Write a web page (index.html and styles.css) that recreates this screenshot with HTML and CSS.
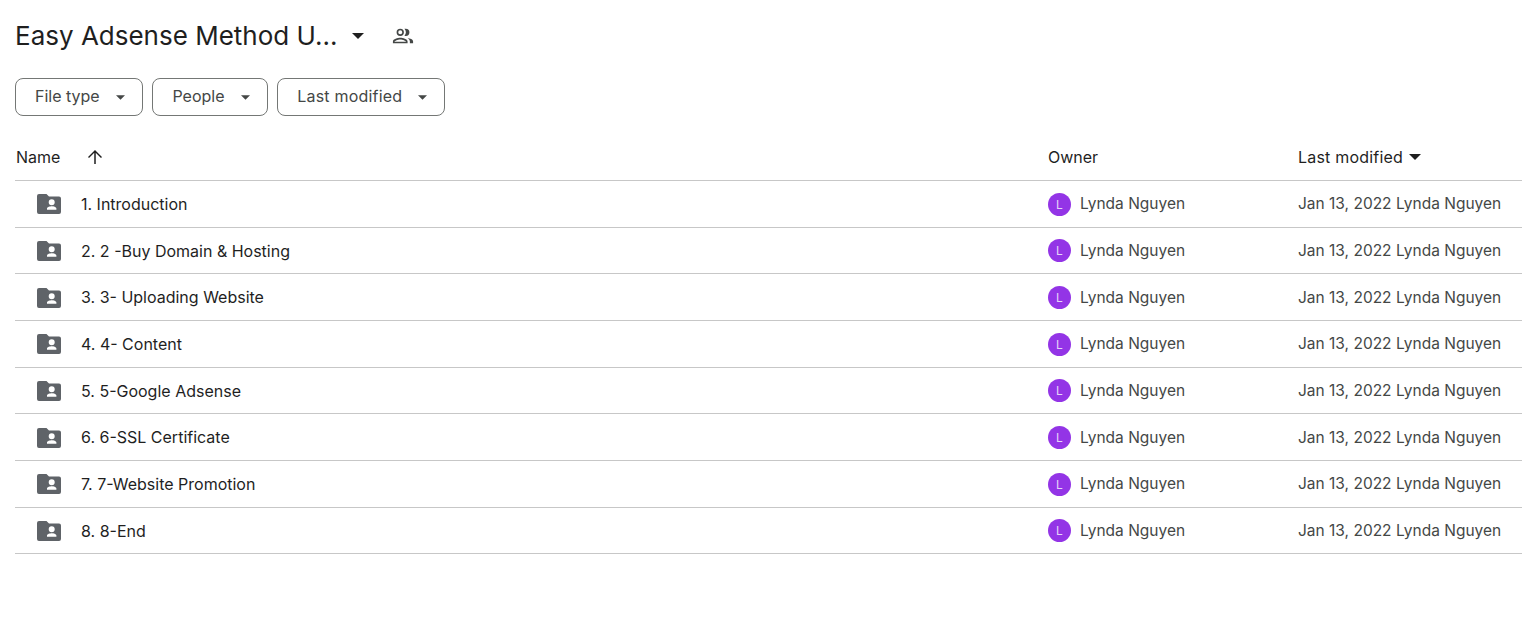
FILE: index.html

```html
<!DOCTYPE html>
<html lang="en">
<head>
    <meta charset="UTF-8">
    <title>Easy Adsense Method - Google Drive</title>
    <link rel="stylesheet" href="styles.css">
</head>
<body>
<svg class="icon-defs" width="0" height="0">
    <symbol id="folder" viewBox="0 0 24 20">
        <path fill-rule="evenodd" d="M2 0h7.500l2.500 2.500h10a2 2 0 0 1 2 2V18a2 2 0 0 1-2 2H2a2 2 0 0 1-2-2V2a2 2 0 0 1 2-2zm12.700 5.300a3 3 0 1 0 0 6 3 3 0 0 0 0-6zm-4.700 10.400h9.400v-1.200c0-1.500-3-2.300-4.700-2.300s-4.700.8-4.700 2.300z"/>
    </symbol>
    <symbol id="caret" viewBox="0 0 10 5">
        <path d="M0 0l5 5 5-5z"/>
    </symbol>
</svg>

<header class="title-row">
    <h1>Easy Adsense Method U...</h1>
    <svg class="title-caret"><use href="#caret"/></svg>
    <svg class="shared-icon" viewBox="0 0 24 24">
        <path d="M9 12a4 4 0 1 0 0-8 4 4 0 0 0 0 8zm0-6.200a2.200 2.200 0 1 1 0 4.400 2.200 2.200 0 0 1 0-4.400zM9 14c-2.700 0-8 1.300-8 4v2h16v-2c0-2.700-5.300-4-8-4zm-6.200 4.200c.2-.9 3.500-2.400 6.200-2.400s6 1.500 6.200 2.400zM15 4c-.5 0-1 .1-1.400.2a6 6 0 0 1 0 7.600c.4.100.9.200 1.400.200a4 4 0 0 0 0-8zM17 14.200c1.400 1 2.500 2.200 2.500 3.800v2H23v-2c0-2.300-3.300-3.400-6-3.800z"/>
    </svg>
</header>

<div class="filters">
    <button class="chip">File type <svg class="chip-caret"><use href="#caret"/></svg></button>
    <button class="chip">People <svg class="chip-caret"><use href="#caret"/></svg></button>
    <button class="chip last-mod">Last modified <svg class="chip-caret"><use href="#caret"/></svg></button>
</div>

<div class="file-list">
    <div class="row head">
        <div class="col-name">
            Name
            <svg class="sort-arrow" viewBox="0 0 16 16"><path d="M8.750 15h-1.500V3.800L2 9 1 8l7-7 7 7-1 1-5.250-5.200z"/></svg>
        </div>
        <div class="col-owner">Owner</div>
        <div class="col-modified last-mod">Last modified <svg class="head-caret"><use href="#caret"/></svg></div>
    </div>

    <div class="row">
        <div class="col-name"><svg class="folder"><use href="#folder"/></svg><span class="file-name">1. Introduction</span></div>
        <div class="col-owner"><span class="avatar">L</span>Lynda Nguyen</div>
        <div class="col-modified"><span class="date">Jan 13, 2022</span>Lynda Nguyen</div>
    </div>
    <div class="row">
        <div class="col-name"><svg class="folder"><use href="#folder"/></svg><span class="file-name">2. 2 -Buy Domain &amp; Hosting</span></div>
        <div class="col-owner"><span class="avatar">L</span>Lynda Nguyen</div>
        <div class="col-modified"><span class="date">Jan 13, 2022</span>Lynda Nguyen</div>
    </div>
    <div class="row">
        <div class="col-name"><svg class="folder"><use href="#folder"/></svg><span class="file-name">3. 3- Uploading Website</span></div>
        <div class="col-owner"><span class="avatar">L</span>Lynda Nguyen</div>
        <div class="col-modified"><span class="date">Jan 13, 2022</span>Lynda Nguyen</div>
    </div>
    <div class="row">
        <div class="col-name"><svg class="folder"><use href="#folder"/></svg><span class="file-name">4. 4- Content</span></div>
        <div class="col-owner"><span class="avatar">L</span>Lynda Nguyen</div>
        <div class="col-modified"><span class="date">Jan 13, 2022</span>Lynda Nguyen</div>
    </div>
    <div class="row">
        <div class="col-name"><svg class="folder"><use href="#folder"/></svg><span class="file-name">5. 5-Google Adsense</span></div>
        <div class="col-owner"><span class="avatar">L</span>Lynda Nguyen</div>
        <div class="col-modified"><span class="date">Jan 13, 2022</span>Lynda Nguyen</div>
    </div>
    <div class="row">
        <div class="col-name"><svg class="folder"><use href="#folder"/></svg><span class="file-name">6. 6-SSL Certificate</span></div>
        <div class="col-owner"><span class="avatar">L</span>Lynda Nguyen</div>
        <div class="col-modified"><span class="date">Jan 13, 2022</span>Lynda Nguyen</div>
    </div>
    <div class="row">
        <div class="col-name"><svg class="folder"><use href="#folder"/></svg><span class="file-name">7. 7-Website Promotion</span></div>
        <div class="col-owner"><span class="avatar">L</span>Lynda Nguyen</div>
        <div class="col-modified"><span class="date">Jan 13, 2022</span>Lynda Nguyen</div>
    </div>
    <div class="row">
        <div class="col-name"><svg class="folder"><use href="#folder"/></svg><span class="file-name">8. 8-End</span></div>
        <div class="col-owner"><span class="avatar">L</span>Lynda Nguyen</div>
        <div class="col-modified"><span class="date">Jan 13, 2022</span>Lynda Nguyen</div>
    </div>
</div>
</body>
</html>
```

FILE: styles.css

```css
html, body {
    height: 100%;
}
body {
    margin: 0;
    padding: 0 0 0 15px;
    background: #fff;
    color: #1f1f1f;
    font-family: Inter, "Open Sans", sans-serif;
    font-size: 15.5px;
    overflow: hidden;
    box-sizing: border-box;
}
.icon-defs {
    display: block;
    position: absolute;
}
.title-row {
    display: flex;
    align-items: center;
    height: 71px;
}
h1 {
    margin: 0;
    font-size: 26px;
    font-weight: 400;
    line-height: 36px;
    width: 337px;
    white-space: nowrap;
}
.title-caret {
    width: 12px;
    height: 6px;
    fill: #1f1f1f;
}
.shared-icon {
    width: 22px;
    height: 22px;
    fill: #444746;
    margin-left: 28px;
}
.filters {
    display: flex;
    gap: 9.75px;
    margin-top: 7px;
}
.chip {
    display: flex;
    align-items: center;
    height: 38px;
    padding: 0 17px 2px 19px;
    border: 1px solid #747775;
    border-radius: 8px;
    background: #fff;
    color: #444746;
    font-family: inherit;
    font-size: 16px;
}
.last-mod {
    letter-spacing: .2px;
}
.chip-caret {
    width: 9px;
    height: 5px;
    fill: #444746;
    margin-left: 16px;
    margin-top: 2px;
}
.file-list {
    margin-top: 18px;
}
.row {
    display: flex;
    align-items: center;
    height: 46.67px;
    padding-top: 1px;
    box-sizing: border-box;
    border-bottom: 1px solid #c7c7c7;
    color: #444746;
}
.row.head {
    height: 47px;
    padding-top: 0;
    color: #1f1f1f;
    font-size: 16px;
}
.col-name {
    display: flex;
    align-items: center;
    width: 1033px;
    flex-shrink: 0;
    color: #1f1f1f;
}
.col-owner {
    display: flex;
    align-items: center;
    width: 250px;
    flex-shrink: 0;
    padding-bottom: 1px;
}
.col-modified {
    display: flex;
    align-items: center;
    white-space: nowrap;
    padding-bottom: 1px;
}
.head .col-name {
    padding-left: 1px;
    box-sizing: border-box;
}
.head .col-owner, .head .col-modified {
    padding-bottom: 0;
}
.sort-arrow {
    width: 16px;
    height: 16px;
    fill: #1f1f1f;
    margin-left: 27px;
}
.head-caret {
    width: 12px;
    height: 6px;
    fill: #1f1f1f;
    margin-left: 6px;
}
.folder {
    width: 24px;
    height: 20px;
    fill: #5f6368;
    margin-left: 22px;
}
.file-name {
    margin-left: 20px;
    padding-bottom: .6px;
    font-size: 16px;
}
.avatar {
    display: flex;
    align-items: center;
    justify-content: center;
    width: 23px;
    height: 23px;
    margin-top: 1px;
    border-radius: 50%;
    background: #9334e6;
    color: #e6d3f8;
    font-size: 12px;
    margin-right: 9px;
}
.date {
    margin-right: 4.5px;
}
```
